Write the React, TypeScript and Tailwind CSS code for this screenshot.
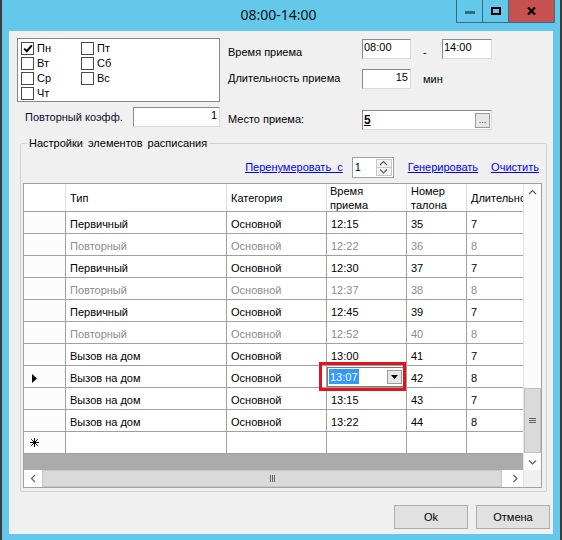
import React from 'react'

type Row = { type: string; cat: string; time: string; num: string; dur: string; muted?: boolean }

const ROWS: Row[] = [
  { type: 'Первичный', cat: 'Основной', time: '12:15', num: '35', dur: '7' },
  { type: 'Повторный', cat: 'Основной', time: '12:22', num: '36', dur: '8', muted: true },
  { type: 'Первичный', cat: 'Основной', time: '12:30', num: '37', dur: '7' },
  { type: 'Повторный', cat: 'Основной', time: '12:37', num: '38', dur: '8', muted: true },
  { type: 'Первичный', cat: 'Основной', time: '12:45', num: '39', dur: '7' },
  { type: 'Повторный', cat: 'Основной', time: '12:52', num: '40', dur: '8', muted: true },
  { type: 'Вызов на дом', cat: 'Основной', time: '13:00', num: '41', dur: '7' },
  { type: 'Вызов на дом', cat: 'Основной', time: '13:07', num: '42', dur: '8' },
  { type: 'Вызов на дом', cat: 'Основной', time: '13:15', num: '43', dur: '7' },
  { type: 'Вызов на дом', cat: 'Основной', time: '13:22', num: '44', dur: '8' },
]
const EDIT_ROW = 7

const DAYS: [string, boolean][] = [
  ['Пн', true], ['Вт', false], ['Ср', false], ['Чт', false],
  ['Пт', false], ['Сб', false], ['Вс', false],
]

// widths include the right grid line
const CELL_W = ['w-[161px]', 'w-[100px]', 'w-[80px]', 'w-[60px]', 'w-[56px]']

function Check({ checked }: { checked?: boolean }) {
  return (
    <span className="w-[13px] h-[13px] border border-[#4a4a4a] bg-white flex items-center justify-center shrink-0">
      {checked && (
        <svg width="10" height="9" viewBox="0 0 10 9">
          <path d="M1.2 4.6 L3.8 7.2 L8.8 1.4" fill="none" stroke="#000" strokeWidth="2" />
        </svg>
      )}
    </span>
  )
}

function TextBox({ className = '', children }: { className?: string; children?: React.ReactNode }) {
  return (
    <div
      className={`h-[20px] bg-white border border-t-[#8a8a8a] border-l-[#8a8a8a] border-r-[#dadada] border-b-[#dadada] ${className}`}
    >
      {children}
    </div>
  )
}

function Chevron({ dir }: { dir: 'up' | 'down' | 'left' | 'right' }) {
  const d = {
    up: 'M1 5 L4.5 1.5 L8 5',
    down: 'M1 1.5 L4.5 5 L8 1.5',
    left: 'M5 1 L1.5 4.5 L5 8',
    right: 'M1.5 1 L5 4.5 L1.5 8',
  }[dir]
  const horiz = dir === 'up' || dir === 'down'
  return (
    <svg width={horiz ? 9 : 7} height={horiz ? 7 : 9} viewBox={horiz ? '0 0 9 7' : '0 0 7 9'}>
      <path d={d} fill="none" stroke="#606060" strokeWidth="1.2" />
    </svg>
  )
}

function TimeCombo() {
  return (
    <div className="w-[78px] h-[20px] border border-[#7a7a7a] bg-white flex items-center pl-[1px]">
      <span className="bg-[#3399ff] text-white px-[1px] leading-[14px] pt-[1px]">13:07</span>
      <span className="ml-auto mr-[2px] w-[15px] h-[14px] bg-[#e6e6e6] border border-[#9a9a9a] flex items-center justify-center">
        <svg width="7" height="4" viewBox="0 0 7 4">
          <path d="M0 0 L7 0 L3.5 4 Z" fill="#000" />
        </svg>
      </span>
    </div>
  )
}

function GridRow({ row, index }: { row: Row; index: number }) {
  const editing = index === EDIT_ROW
  const vals = [row.type, row.cat, row.time, row.num, row.dur]
  return (
    <div className={`flex h-[22px] border-b border-[#a0a0a0] bg-white ${row.muted ? 'text-[#8c8c8c]' : 'text-black'}`}>
      <div className="w-[42px] border-r border-[#a0a0a0] bg-[#fcfcfc] flex items-center pl-[8px] pt-[3px]">
        {editing && (
          <svg width="5" height="9" viewBox="0 0 5 9">
            <path d="M0 0 L5 4.5 L0 9 Z" fill="#000" />
          </svg>
        )}
      </div>
      {vals.map((v, i) =>
        editing && i === 2 ? (
          <div key={i} className={`${CELL_W[i]} border-r border-[#a0a0a0] flex items-center`}>
            <TimeCombo />
          </div>
        ) : (
          <div
            key={i}
            className={`${CELL_W[i]} ${i < 4 ? 'border-r border-[#a0a0a0]' : ''} px-[4px] pt-[6px] whitespace-nowrap overflow-hidden`}
          >
            {v}
          </div>
        )
      )}
    </div>
  )
}

function Grid() {
  return (
    <div className="relative w-[519px] h-[305px] border border-[#a0a0a0] bg-[#ababab] flex flex-col">
      <div className="flex h-[286px]">
        <div className="w-[499px] flex flex-col">
          {/* header */}
          <div className="flex h-[28px] bg-white border-b border-[#a0a0a0] text-black">
            <div className="w-[42px] border-r border-[#dedede]" />
            <div className="w-[161px] border-r border-[#dedede] px-[4px] pt-[2px] flex items-center">Тип</div>
            <div className="w-[100px] border-r border-[#dedede] px-[4px] pt-[2px] flex items-center">Категория</div>
            <div className="w-[80px] border-r border-[#dedede] px-[3px] flex items-center leading-[14px]">
              Время<br />приема
            </div>
            <div className="w-[60px] border-r border-[#dedede] px-[4px] flex items-center leading-[14px]">
              Номер<br />талона
            </div>
            <div className="w-[56px] px-[4px] pt-[2px] flex items-center whitespace-nowrap overflow-hidden">Длительность</div>
          </div>
          {ROWS.map((r, i) => (
            <GridRow key={i} row={r} index={i} />
          ))}
          {/* new row */}
          <div className="flex h-[22px] border-b border-[#a0a0a0] bg-white">
            <div className="w-[42px] border-r border-[#a0a0a0] bg-[#fcfcfc] flex items-center pl-[6px]">
              <svg width="9" height="9" viewBox="0 0 9 9">
                <path d="M4.5 0 V9 M0 4.5 H9 M1.3 1.3 L7.7 7.7 M7.7 1.3 L1.3 7.7" stroke="#000" strokeWidth="1" />
              </svg>
            </div>
            <div className="w-[161px] border-r border-[#a0a0a0]" />
            <div className="w-[100px] border-r border-[#a0a0a0]" />
            <div className="w-[80px] border-r border-[#a0a0a0]" />
            <div className="w-[60px] border-r border-[#a0a0a0]" />
            <div className="w-[56px]" />
          </div>
        </div>
        {/* vertical scrollbar */}
        <div className="w-[18px] bg-[#fbfbfb] border-l border-[#e2e2e2] flex flex-col">
          <div className="h-[17px] flex items-center justify-center">
            <Chevron dir="up" />
          </div>
          <div className="flex-1" />
          <div className="h-[65px] bg-[#dadada] border border-[#c2c2c2] flex items-center justify-center">
            <div className="w-[7px] flex flex-col gap-[1px]">
              <span className="h-[1px] bg-[#606060]" />
              <span className="h-[1px] bg-[#606060]" />
              <span className="h-[1px] bg-[#606060]" />
            </div>
          </div>
          <div className="h-[1px]" />
          <div className="h-[16px] flex items-center justify-center">
            <Chevron dir="down" />
          </div>
        </div>
      </div>
      {/* horizontal scrollbar */}
      <div className="flex h-[17px] bg-white">
        <div className="w-[18px] flex items-center justify-center">
          <Chevron dir="left" />
        </div>
        <div className="w-[460px] bg-[#dadada] border border-[#c8c8c8] flex items-center justify-center">
          <div className="h-[7px] flex gap-[1px]">
            <span className="w-[1px] bg-[#606060]" />
            <span className="w-[1px] bg-[#606060]" />
            <span className="w-[1px] bg-[#606060]" />
          </div>
        </div>
        <div className="w-[5px]" />
        <div className="w-[16px] flex items-center justify-center">
          <Chevron dir="right" />
        </div>
        <div className="w-[18px] bg-[#f0f0f0] border-l border-[#e2e2e2]" />
      </div>
      {/* highlight annotation */}
      <div className="absolute left-[295px] top-[178px] w-[87px] h-[29px] border-[3px] border-[#e3131b]" />
    </div>
  )
}

function TitleBar() {
  return (
    <div className="h-[31px] flex shrink-0">
      <div className="flex-1" />
      <div className="pt-[6px] text-[14px] leading-[18px] font-['Noto_Sans',sans-serif] text-[#111]">08:00-14:00</div>
      <div className="flex-1 flex justify-end pr-[5px]">
        <div className="flex h-[23px] border-l border-b border-r border-[#3a6a80]">
          <div className="w-[26px] border-r border-[#3a6a80] flex items-center justify-center">
            <span className="w-[10px] h-[3px] bg-[#2d6b87] mt-[2px]" />
          </div>
          <div className="w-[26px] border-r border-[#3a6a80] flex items-center justify-center">
            <span className="w-[10px] h-[8px] border-2 border-black" />
          </div>
          <div className="w-[45px] bg-[#c75050] flex items-center justify-center">
            <svg width="9" height="8" viewBox="0 0 9 8">
              <path d="M1 0.5 L8 7.5 M8 0.5 L1 7.5" stroke="#000" strokeWidth="2.2" />
            </svg>
          </div>
        </div>
      </div>
    </div>
  )
}

export default function App() {
  return (
    <div className="w-[562px] h-[540px] bg-[#64c8ea] border-x-2 border-[#3b3b3b] flex flex-col overflow-hidden font-['Liberation_Sans',Arial,sans-serif] text-[11px] leading-[13px] text-black">
      <TitleBar />
      <div className="ml-[7px] w-[544px] h-[503px] bg-[#f0f0f0] flex flex-col">
        {/* top settings */}
        <div className="flex pt-[7px]">
          <div className="ml-[8px] w-[203px] flex flex-col">
            <div className="h-[64px] bg-white border border-[#828790] pt-[2px] pl-[3px] grid grid-flow-col grid-rows-4 grid-cols-[60px_60px]">
              {DAYS.map(([d, c]) => (
                <div key={d} className="h-[15px] flex items-center gap-[3px]">
                  <Check checked={c} />
                  <span>{d}</span>
                </div>
              ))}
            </div>
            <div className="mt-[5px] flex items-start">
              <span className="pl-[8px] pt-[4px] text-[#0c0c30]">Повторный коэфф.</span>
              <TextBox className="ml-auto w-[87px] text-right pr-[2px] pt-[1px]">1</TextBox>
            </div>
          </div>
          <div className="ml-[8px] mt-[1px] flex flex-col">
            <div className="flex items-start">
              <span className="w-[134px] pt-[7px]">Время приема</span>
              <TextBox className="w-[49px] pl-[1px] pt-[1px]">08:00</TextBox>
              <span className="w-[31px] pl-[12px] pt-[7px]">-</span>
              <TextBox className="w-[50px] pl-[1px] pt-[1px]">14:00</TextBox>
            </div>
            <div className="mt-[10px] flex items-start">
              <span className="w-[134px] pt-[3px]">Длительность приема</span>
              <TextBox className="w-[49px] text-right pr-[2px] pt-[1px]">15</TextBox>
              <span className="pl-[12px] pt-[4px]">мин</span>
            </div>
            <div className="mt-[21px] flex items-start">
              <span className="w-[134px] pt-[3px]">Место приема:</span>
              <TextBox className="w-[130px] flex items-center pl-[1px]">
                <span className="font-bold underline text-[12px]">5</span>
                <span className="ml-auto mr-[1px] w-[15px] h-[15px] bg-[#e6e6e6] border border-[#9a9a9a] flex items-end justify-center text-[9px] leading-[9px] pb-[2px] text-[#333]">
                  ...
                </span>
              </TextBox>
            </div>
          </div>
        </div>

        {/* schedule element settings */}
        <fieldset className="ml-[11px] mt-[7px] w-[527px] border border-[#d2d2d2] rounded-[2px] pl-[2px] pr-[4px] pb-[3px]">
          <legend className="ml-[4px] px-[2px] leading-[13px] [word-spacing:2px]">Настройки элементов расписания</legend>
          <div className="mt-[7px] h-[21px] flex items-center justify-end pr-[3px]">
            <span className="text-[#0000ff] underline [word-spacing:3px]">Перенумеровать с</span>
            <div className="ml-[9px] w-[42px] h-[21px] bg-white border border-[#a0a0a0] flex">
              <span className="flex-1 pl-[2px] pt-[3px]">1</span>
              <div className="w-[16px] my-[1px] mr-[1px] flex flex-col">
                <div className="flex-1 flex items-center justify-center bg-[#f4f4f4] border border-[#c8c8c8]">
                  <Chevron dir="up" />
                </div>
                <div className="flex-1 flex items-center justify-center bg-[#f4f4f4] border border-t-0 border-[#c8c8c8]">
                  <Chevron dir="down" />
                </div>
              </div>
            </div>
            <span className="ml-[14px] text-[#0000ff] underline">Генерировать</span>
            <span className="ml-[13px] text-[#0000ff] underline">Очистить</span>
          </div>
          <div className="mt-[5px]">
            <Grid />
          </div>
        </fieldset>

        {/* dialog buttons */}
        <div className="mt-[13px] flex justify-end gap-[8px] pr-[3px]">
          <button className="w-[74px] h-[24px] bg-[#e1e1e1] border border-[#adadad]">Ok</button>
          <button className="w-[74px] h-[24px] bg-[#e1e1e1] border border-[#adadad]">Отмена</button>
        </div>
      </div>
    </div>
  )
}
